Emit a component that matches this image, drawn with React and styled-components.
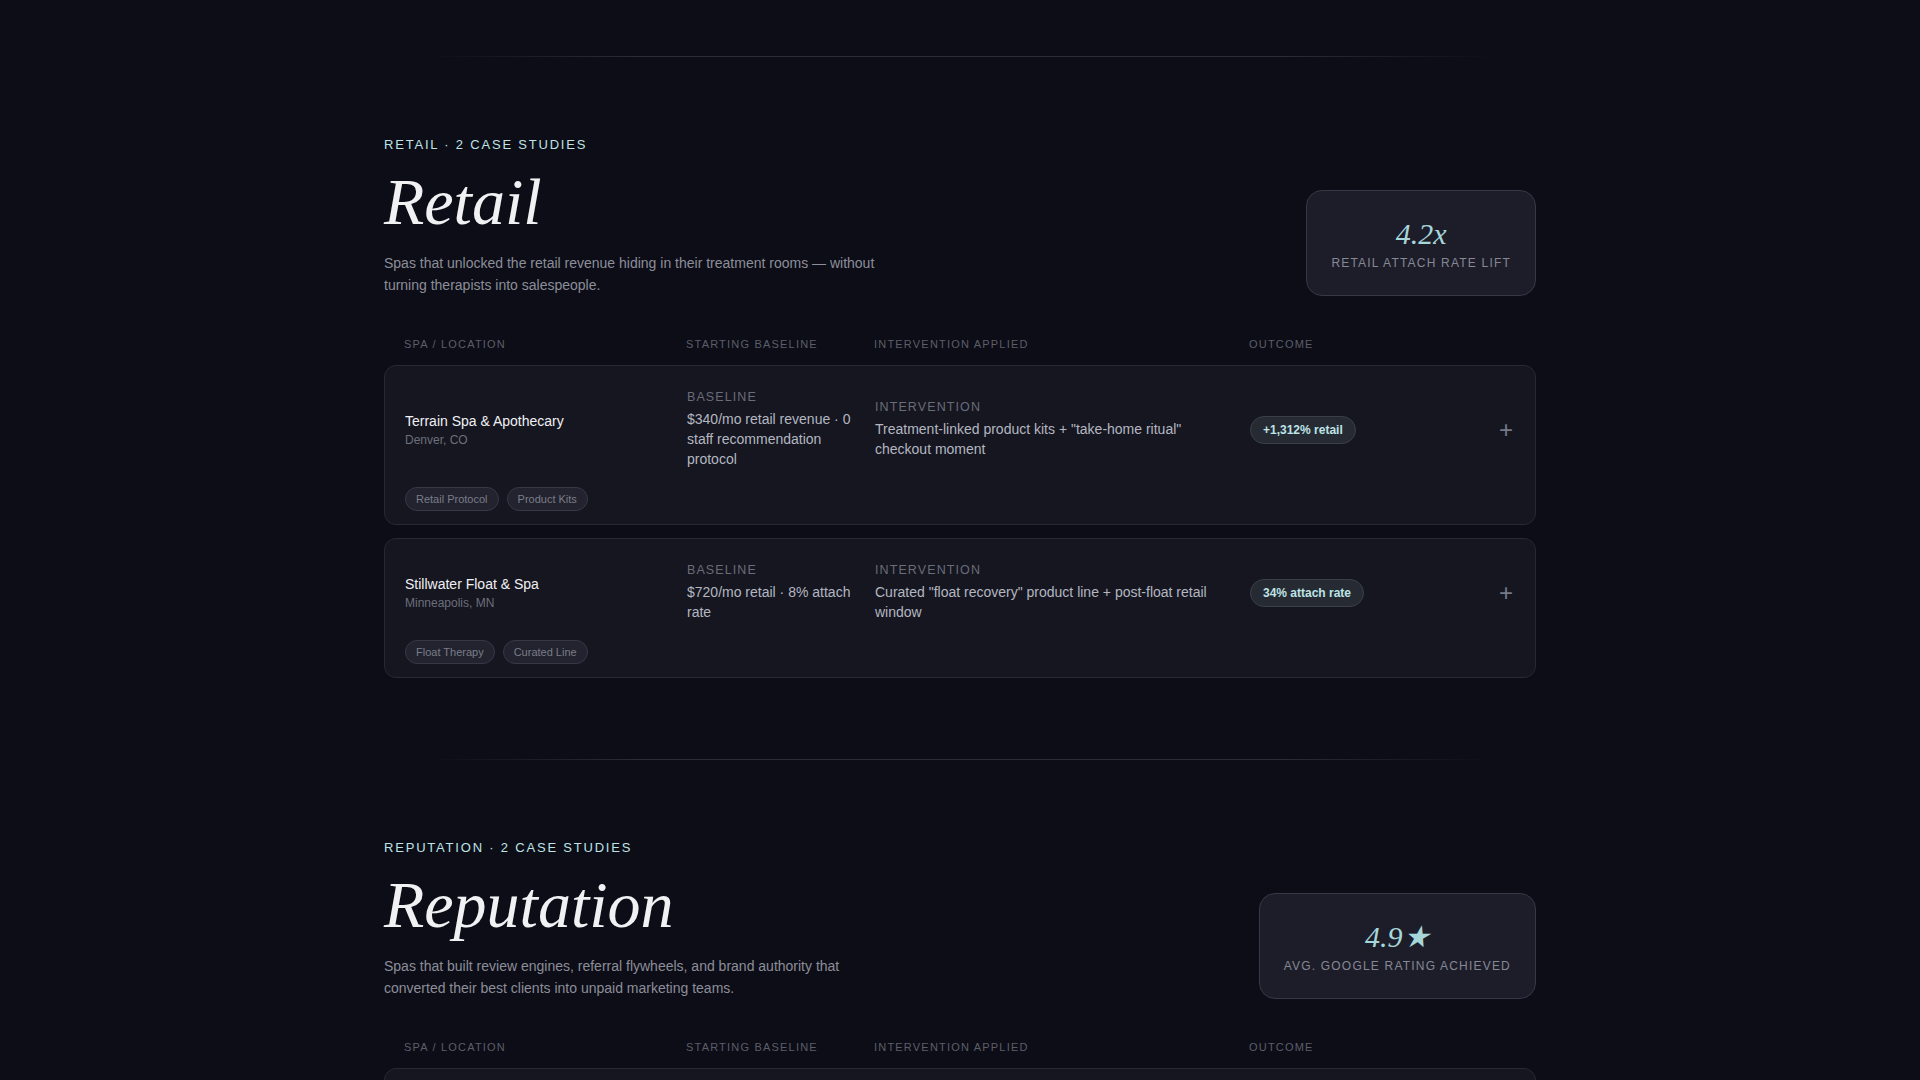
import React from "react";
import styled, { createGlobalStyle } from "styled-components";

const Global = createGlobalStyle`
  html, body { margin: 0; background: #0c0d16; }
  body { font-family: "Liberation Sans", Arial, sans-serif; color: #e6e6ea; }
`;

const Page = styled.div`
  width: 1152px;
  margin: 0 auto;
  padding-top: 56px;
`;

const Divider = styled.div`
  height: 1px;
  margin: 0 42px;
  background: linear-gradient(90deg, transparent, #2a2c3a 20%, #2a2c3a 80%, transparent);
`;

const Section = styled.section`
  padding: 80px 0 68px;
`;

const Head = styled.div`
  display: flex;
  justify-content: space-between;
  align-items: flex-end;
  margin-bottom: 42px;
`;

const Eyebrow = styled.div`
  font-size: 13px;
  letter-spacing: 1.8px;
  color: #bfe3e6;
  text-transform: uppercase;
`;

const Title = styled.h2`
  margin: 12px 0 12px;
  font-family: "Liberation Serif", "Times New Roman", serif;
  font-style: italic;
  font-weight: 400;
  font-size: 66px;
  line-height: 76px;
  color: #f1f1f4;
`;

const Desc = styled.p`
  margin: 0;
  max-width: ${(p) => p.$w}px;
  font-size: 14px;
  line-height: 22px;
  color: #8c8e9a;
`;

const Stat = styled.div`
  padding: 27px 24px 25px;
  border: 1px solid #363846;
  border-radius: 16px;
  background: #1d1d2a;
  text-align: center;
`;

const StatNum = styled.div`
  font-family: "Liberation Serif", "Times New Roman", serif;
  font-style: italic;
  font-size: 30px;
  line-height: 32px;
  color: #a7d6da;
`;

const StatLabel = styled.div`
  margin-top: 6px;
  font-size: 12px;
  letter-spacing: 1.2px;
  color: #868894;
  text-transform: uppercase;
`;

const Cols = "282px 188px 375px 1fr";

const HeaderRow = styled.div`
  display: grid;
  grid-template-columns: ${Cols};
  padding: 0 20px;
  margin-bottom: 15px;
  font-size: 11px;
  letter-spacing: 1.2px;
  color: #5c5e6a;
`;

const Card = styled.div`
  border: 1px solid #262834;
  border-radius: 12px;
  background: #151620;
  padding: 24px 20px 13px;
  margin-bottom: 13px;
`;

const RowGrid = styled.div`
  display: grid;
  grid-template-columns: ${Cols};
  align-items: center;
`;

const Name = styled.div`
  font-size: 14px;
  color: #f0f0f3;
`;

const Loc = styled.div`
  margin-top: 4px;
  font-size: 12px;
  color: #6d6f7b;
`;

const Label = styled.div`
  font-size: 12.5px;
  letter-spacing: 1.1px;
  color: #6a6c78;
  margin-bottom: 5px;
`;

const Body = styled.div`
  font-size: 14px;
  line-height: 20px;
  color: #b4b6c0;
  padding-right: 10px;
`;

const OutcomeCell = styled.div`
  display: flex;
  align-items: center;
  justify-content: space-between;
`;

const Badge = styled.span`
  display: inline-block;
  padding: 6px 12px;
  border-radius: 999px;
  border: 1px solid #3a3f4a;
  background: #262b33;
  color: #bfe3e6;
  font-size: 12px;
  font-weight: 700;
`;

const Plus = styled.span`
  font-size: 24px;
  font-weight: 300;
  color: #777a86;
  line-height: 1;
  margin-right: 2px;
`;

const Tags = styled.div`
  display: flex;
  gap: 8px;
  margin-top: 18px;
`;

const Tag = styled.span`
  padding: 5px 10px;
  border-radius: 999px;
  border: 1px solid #363846;
  background: #22232e;
  color: #7b7d89;
  font-size: 11px;
`;

const sections = [
  {
    eyebrow: "Retail · 2 case studies",
    title: "Retail",
    desc: "Spas that unlocked the retail revenue hiding in their treatment rooms — without turning therapists into salespeople.",
    w: 520,
    stat: "4.2x",
    statLabel: "Retail attach rate lift",
    rows: [
      {
        name: "Terrain Spa & Apothecary",
        loc: "Denver, CO",
        base: "$340/mo retail revenue · 0 staff recommendation protocol",
        inter: 'Treatment-linked product kits + "take-home ritual" checkout moment',
        out: "+1,312% retail",
        tags: ["Retail Protocol", "Product Kits"],
      },
      {
        name: "Stillwater Float & Spa",
        loc: "Minneapolis, MN",
        base: "$720/mo retail · 8% attach rate",
        inter: 'Curated "float recovery" product line + post-float retail window',
        out: "34% attach rate",
        tags: ["Float Therapy", "Curated Line"],
      },
    ],
  },
  {
    eyebrow: "Reputation · 2 case studies",
    title: "Reputation",
    desc: "Spas that built review engines, referral flywheels, and brand authority that converted their best clients into unpaid marketing teams.",
    w: 480,
    stat: "4.9★",
    statLabel: "Avg. Google rating achieved",
    rows: [
      {
        name: "Lumen Wellness House",
        loc: "Austin, TX",
        base: "3.9★ Google · 41 reviews",
        inter: "Post-visit review ritual + referral card program",
        out: "4.9★ rating",
        tags: ["Reviews", "Referrals"],
      },
    ],
  },
];

export default function App() {
  return (
    <>
      <Global />
      <Page>
        {sections.map((s, i) => (
          <React.Fragment key={i}>
            <Divider />
            <Section>
              <Head>
                <div>
                  <Eyebrow>{s.eyebrow}</Eyebrow>
                  <Title>{s.title}</Title>
                  <Desc $w={s.w}>{s.desc}</Desc>
                </div>
                <Stat>
                  <StatNum>{s.stat}</StatNum>
                  <StatLabel>{s.statLabel}</StatLabel>
                </Stat>
              </Head>
              <HeaderRow>
                <span>SPA / LOCATION</span>
                <span>STARTING BASELINE</span>
                <span>INTERVENTION APPLIED</span>
                <span>OUTCOME</span>
              </HeaderRow>
              {s.rows.map((r) => (
                <Card key={r.name}>
                  <RowGrid>
                    <div>
                      <Name>{r.name}</Name>
                      <Loc>{r.loc}</Loc>
                    </div>
                    <div>
                      <Label>BASELINE</Label>
                      <Body>{r.base}</Body>
                    </div>
                    <div>
                      <Label>INTERVENTION</Label>
                      <Body>{r.inter}</Body>
                    </div>
                    <OutcomeCell>
                      <Badge>{r.out}</Badge>
                      <Plus>+</Plus>
                    </OutcomeCell>
                  </RowGrid>
                  <Tags>
                    {r.tags.map((t) => (
                      <Tag key={t}>{t}</Tag>
                    ))}
                  </Tags>
                </Card>
              ))}
            </Section>
          </React.Fragment>
        ))}
      </Page>
    </>
  );
}
